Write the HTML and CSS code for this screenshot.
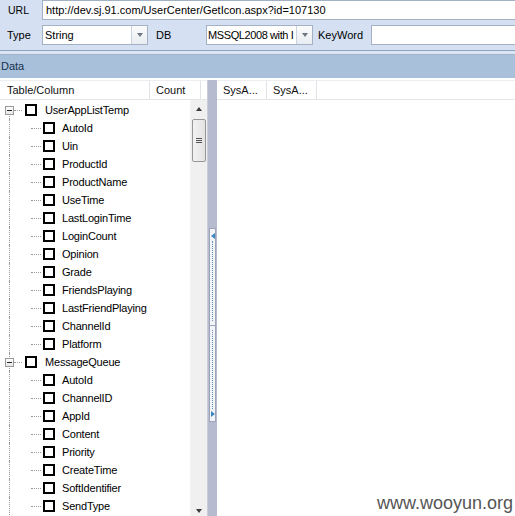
FILE: index.html
```html
<!DOCTYPE html>
<html>
<head>
<meta charset="utf-8">
<link rel="stylesheet" href="styles.css">
</head>
<body>
<div class="app">
  <div class="toolbar">
    <div class="trow row-url">
      <span class="lbl lbl-url">URL</span>
      <div class="field url">http://dev.sj.91.com/UserCenter/GetIcon.aspx?id=107130</div>
    </div>
    <div class="trow row-opts">
      <span class="lbl lbl-type">Type</span>
      <div class="combo combo-type"><span class="ctext">String</span><span class="cbtn"><i class="tri"></i></span></div>
      <span class="lbl lbl-db">DB</span>
      <div class="combo combo-db"><span class="ctext db-text">MSSQL2008 with I</span><span class="cbtn"><i class="tri"></i></span></div>
      <span class="lbl lbl-kw">KeyWord</span>
      <div class="field kw"></div>
    </div>
  </div>
  <div class="sep"></div>
  <div class="databar">Data</div>
  <div class="gap"></div>
  <div class="main">
    <div class="left">
      <div class="hdr">
        <div class="hc hc-name">Table/Column</div>
        <div class="hc hc-count">Count</div>
        <div class="hc hc-rest"></div>
      </div>
      <div class="lbody">
        <div class="tree">
          <div class="row parent first"><span class="exp"><i></i></span><span class="conn"></span><span class="cb"></span><span class="txt">UserAppListTemp</span></div>
          <div class="row child"><span class="conn"></span><span class="cb"></span><span class="txt">AutoId</span></div>
          <div class="row child"><span class="conn"></span><span class="cb"></span><span class="txt">Uin</span></div>
          <div class="row child"><span class="conn"></span><span class="cb"></span><span class="txt">ProductId</span></div>
          <div class="row child"><span class="conn"></span><span class="cb"></span><span class="txt">ProductName</span></div>
          <div class="row child"><span class="conn"></span><span class="cb"></span><span class="txt">UseTime</span></div>
          <div class="row child"><span class="conn"></span><span class="cb"></span><span class="txt">LastLoginTime</span></div>
          <div class="row child"><span class="conn"></span><span class="cb"></span><span class="txt">LoginCount</span></div>
          <div class="row child"><span class="conn"></span><span class="cb"></span><span class="txt">Opinion</span></div>
          <div class="row child"><span class="conn"></span><span class="cb"></span><span class="txt">Grade</span></div>
          <div class="row child"><span class="conn"></span><span class="cb"></span><span class="txt">FriendsPlaying</span></div>
          <div class="row child"><span class="conn"></span><span class="cb"></span><span class="txt">LastFriendPlaying</span></div>
          <div class="row child"><span class="conn"></span><span class="cb"></span><span class="txt">ChannelId</span></div>
          <div class="row child"><span class="conn"></span><span class="cb"></span><span class="txt">Platform</span></div>
          <div class="row parent"><span class="exp"><i></i></span><span class="conn"></span><span class="cb"></span><span class="txt">MessageQueue</span></div>
          <div class="row child"><span class="conn"></span><span class="cb"></span><span class="txt">AutoId</span></div>
          <div class="row child"><span class="conn"></span><span class="cb"></span><span class="txt">ChannelID</span></div>
          <div class="row child"><span class="conn"></span><span class="cb"></span><span class="txt">AppId</span></div>
          <div class="row child"><span class="conn"></span><span class="cb"></span><span class="txt">Content</span></div>
          <div class="row child"><span class="conn"></span><span class="cb"></span><span class="txt">Priority</span></div>
          <div class="row child"><span class="conn"></span><span class="cb"></span><span class="txt">CreateTime</span></div>
          <div class="row child"><span class="conn"></span><span class="cb"></span><span class="txt">SoftIdentifier</span></div>
          <div class="row child"><span class="conn"></span><span class="cb"></span><span class="txt">SendType</span></div>
        </div>
        <div class="vscroll">
          <div class="sbtn"><i class="up"></i></div>
          <div class="thumb"><span class="grip"><i></i><i></i><i></i></span></div>
          <div class="strack"></div>
          <div class="sbtn sbtn-down"><i class="down"></i></div>
        </div>
      </div>
    </div>
    <div class="splitter">
      <div class="handle">
        <div class="half top"><i class="arr-l"></i><span class="dots"></span></div>
        <div class="half bottom"><span class="dots"></span><i class="arr-r"></i></div>
      </div>
    </div>
    <div class="right">
      <div class="hdr">
        <div class="hc hc-sys">SysA...</div>
        <div class="hc hc-sys">SysA...</div>
        <div class="hc hc-fill"></div>
      </div>
    </div>
  </div>
  <div class="watermark">www.wooyun.org</div>
</div>
</body>
</html>
```
FILE: styles.css
```css
* { box-sizing: border-box; }
html, body { margin: 0; padding: 0; }
body {
  width: 515px;
  height: 516px;
  overflow: hidden;
  font-family: "Liberation Sans", Arial, sans-serif;
  font-size: 11px;
  color: #000;
  background: #d5e1f2;
}
.app {
  position: relative;
  width: 515px;
  height: 516px;
  overflow: hidden;
  display: flex;
  flex-direction: column;
}
.toolbar {
  display: flex;
  flex-direction: column;
  gap: 5px;
  height: 50px;
  background: #d5e1f2;
}
.trow {
  display: flex;
  align-items: center;
  height: 20px;
}
.lbl { white-space: nowrap; flex: none; }
.lbl-url { width: 42px; padding-left: 8px; font-size: 10.5px; }
.lbl-type { width: 42px; padding-left: 7px; }
.lbl-db { width: 58px; padding-left: 8px; }
.lbl-kw { width: 58px; padding-left: 5px; }
.field {
  height: 20px;
  background: #fff;
  border: 1px solid #a3b1c4;
  padding: 0 0 0 3px;
  line-height: 18px;
  white-space: nowrap;
  overflow: hidden;
}
.url { width: 480px; flex: none; }
.kw { width: 150px; flex: none; }
.combo {
  display: flex;
  height: 20px;
  background: #fff;
  border: 1px solid #a3b1c4;
  flex: none;
}
.combo-type { width: 106px; }
.combo-db { width: 107px; }
.ctext {
  flex: 1;
  padding-left: 2px;
  line-height: 18px;
  white-space: nowrap;
  overflow: hidden;
}
.db-text { letter-spacing: -0.4px; padding-left: 1px; }
.cbtn {
  width: 16px;
  flex: none;
  border-left: 1px solid #c9d2de;
  background: linear-gradient(#fbfbfb, #e9edf2);
  display: flex;
  align-items: center;
  justify-content: center;
}
.tri {
  width: 0; height: 0;
  border-left: 3.5px solid transparent;
  border-right: 3.5px solid transparent;
  border-top: 4px solid #6d7683;
}
.sep {
  height: 5px;
  border-top: 1px solid #8fa4c0;
  border-bottom: 1px solid #9fb3cd;
  background: #dbe5f3;
}
.databar {
  height: 23px;
  background: #a9c0da;
  color: #17304f;
  padding-left: 1px;
  line-height: 23px;
  font-size: 11px;
}
.gap { height: 2px; background: #fff; }
.main {
  flex: 1;
  display: flex;
  background: #fff;
  min-height: 0;
}
.left {
  width: 207px;
  display: flex;
  flex-direction: column;
}
.hdr {
  display: flex;
  height: 20px;
  border-top: 1px solid #eceef1;
  border-bottom: 1px solid #e3e5e8;
  background: #fff;
}
.hc {
  line-height: 18px;
  white-space: nowrap;
  color: #111;
  border-right: 1px solid #e1e3e6;
}
.hc-name { width: 150px; padding-left: 7px; }
.hc-count { width: 51px; padding-left: 6px; }
.hc-rest { flex: 1; border-right: none; }
.lbody {
  flex: 1;
  display: flex;
  min-height: 0;
}
.tree {
  flex: 1;
  padding-top: 1px;
  overflow: hidden;
}
.row {
  position: relative;
  height: 18px;
  display: flex;
  align-items: center;
  white-space: nowrap;
}
.row::before {
  content: "";
  position: absolute;
  left: 9px;
  top: 0;
  bottom: 0;
  border-left: 1px dotted #9a9a9a;
}
.row.first::before { top: 9px; }
.row.parent { padding-left: 5px; }
.row.child { padding-left: 31px; }
.exp {
  position: relative;
  z-index: 1;
  width: 9px;
  height: 9px;
  border: 1px solid #9a9a9a;
  background: linear-gradient(#ffffff, #e6e6e6);
  display: flex;
  align-items: center;
  justify-content: center;
  flex: none;
}
.exp i {
  width: 5px;
  height: 1px;
  background: #222;
}
.conn {
  height: 0;
  border-top: 1px dotted #9a9a9a;
  flex: none;
}
.parent .conn { width: 8px; }
.child .conn { width: 10px; }
.cb {
  width: 12px;
  height: 12px;
  border: 2px solid #000;
  background: #fff;
  flex: none;
}
.parent .cb { margin-left: 3px; }
.child .cb { margin-left: 2px; }
.txt { letter-spacing: -0.2px; }
.parent .txt { margin-left: 8px; }
.child .txt { margin-left: 7px; }
.vscroll {
  width: 17px;
  background: #f0f0f0;
  display: flex;
  flex-direction: column;
  align-items: center;
  border-left: 1px solid #f4f4f4;
}
.sbtn {
  height: 17px;
  width: 100%;
  display: flex;
  align-items: center;
  justify-content: center;
  flex: none;
}
.sbtn-down { height: 14px; align-items: flex-end; padding-bottom: 3px; }
.up {
  width: 0; height: 0;
  border-left: 3.5px solid transparent;
  border-right: 3.5px solid transparent;
  border-bottom: 4px solid #3c3c3c;
}
.down {
  width: 0; height: 0;
  border-left: 3.5px solid transparent;
  border-right: 3.5px solid transparent;
  border-top: 4px solid #3c3c3c;
}
.thumb {
  margin-top: 2px;
  width: 14px;
  height: 43px;
  border: 1px solid #979797;
  border-radius: 2px;
  background: linear-gradient(to right, #f3f3f3, #e2e2e2);
  display: flex;
  align-items: center;
  justify-content: center;
  flex: none;
}
.grip { display: flex; flex-direction: column; gap: 1px; }
.grip i { display: block; width: 6px; height: 1px; background: #555; }
.strack { flex: 1; }
.splitter {
  width: 10px;
  flex: none;
  background: #b6bbcf;
  border-left: 1px solid #c9cdda;
  display: flex;
  align-items: flex-start;
  justify-content: center;
  padding-top: 148px;
}
.handle {
  width: 7px;
  height: 194px;
  display: flex;
  flex-direction: column;
  background: #f2f4f8;
  border: 1px solid #9ea4b8;
}
.half {
  flex: 1;
  display: flex;
  flex-direction: column;
  align-items: center;
  padding: 4px 0;
  gap: 2px;
}
.half.top { border-bottom: 1px solid #9ea4b8; }
.dots {
  flex: 1;
  width: 0;
  border-left: 1px dotted #5d8fbd;
}
.arr-l {
  width: 0; height: 0;
  border-top: 3px solid transparent;
  border-bottom: 3px solid transparent;
  border-right: 4px solid #3d86c6;
}
.arr-r {
  width: 0; height: 0;
  border-top: 3px solid transparent;
  border-bottom: 3px solid transparent;
  border-left: 4px solid #3d86c6;
}
.right {
  flex: 1;
  display: flex;
  flex-direction: column;
}
.hc-sys { width: 50px; padding-left: 6px; }
.hc-fill { flex: 1; border-right: none; }
.watermark {
  position: absolute;
  right: 2px;
  bottom: 4px;
  font-family: "Liberation Sans", Arial, sans-serif;
  font-size: 18px;
  line-height: 18px;
  color: #555;
}
```
